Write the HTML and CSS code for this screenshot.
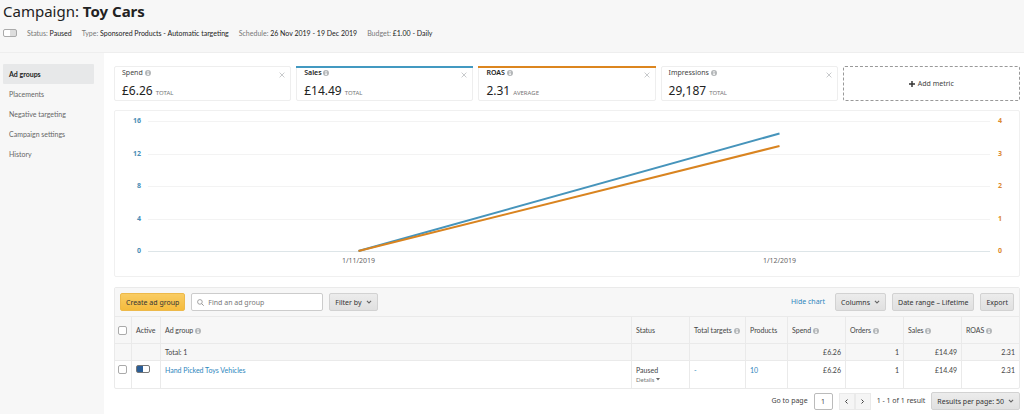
FILE: index.html
```
<!DOCTYPE html>
<html lang="en">
<head>
    <meta charset="UTF-8">
    <meta name="viewport" content="width=device-width, initial-scale=1.0">
    <title>Campaign: Toy Cars</title>
    <link rel="stylesheet" href="styles.css">
</head>
<body>
    <!-- shared icons -->
    <svg class="sprite" aria-hidden="true">
        <symbol id="info" viewBox="0 0 12 12">
            <circle cx="6" cy="6" r="6" fill="#b4b7b9"/>
            <path d="M5 2.2h2v1.8H5zM4.4 5h2.8v3.8h.8V10H4.2V8.800h.8V6.200h-.6z" fill="#fff"/>
        </symbol>
        <symbol id="cross" viewBox="0 0 10 10">
            <path d="M1 1l8 8M9 1l-8 8" fill="none" stroke="#b8bbbd" stroke-width="1.300"/>
        </symbol>
        <symbol id="down" viewBox="0 0 10 10">
            <path d="M1.500 3l3.500 3.500L8.500 3" fill="none" stroke="#666" stroke-width="1.800"/>
        </symbol>
    </svg>

    <header class="header">
        <h1>Campaign: <b>Toy Cars</b></h1>
        <div class="summary">
            <input type="checkbox" class="toggle toggle-off" aria-label="Campaign active">
            <span>Status: <b>Paused</b></span>
            <span>Type: <b>Sponsored Products - Automatic targeting</b></span>
            <span>Schedule: <b>26 Nov 2019 - 19 Dec 2019</b></span>
            <span>Budget: <b>£1.00 - Daily</b></span>
        </div>
    </header>

    <div class="page">
        <nav class="sidebar">
            <a href="#" class="active">Ad groups</a>
            <a href="#">Placements</a>
            <a href="#">Negative targeting</a>
            <a href="#">Campaign settings</a>
            <a href="#">History</a>
        </nav>

        <main class="main">
            <div class="metrics">
                <div class="metric">
                    <div class="metric-name">Spend <svg class="info"><use href="#info"/></svg></div>
                    <div class="metric-value">£6.26 <small>TOTAL</small></div>
                    <button class="close" aria-label="Remove Spend"><svg><use href="#cross"/></svg></button>
                </div>
                <div class="metric metric-blue">
                    <div class="metric-name">Sales <svg class="info"><use href="#info"/></svg></div>
                    <div class="metric-value">£14.49 <small>TOTAL</small></div>
                    <button class="close" aria-label="Remove Sales"><svg><use href="#cross"/></svg></button>
                </div>
                <div class="metric metric-orange">
                    <div class="metric-name">ROAS <svg class="info"><use href="#info"/></svg></div>
                    <div class="metric-value">2.31 <small>AVERAGE</small></div>
                    <button class="close" aria-label="Remove ROAS"><svg><use href="#cross"/></svg></button>
                </div>
                <div class="metric">
                    <div class="metric-name">Impressions <svg class="info"><use href="#info"/></svg></div>
                    <div class="metric-value">29,187 <small>TOTAL</small></div>
                    <button class="close" aria-label="Remove Impressions"><svg><use href="#cross"/></svg></button>
                </div>
                <button class="add-metric">
                    <svg viewBox="0 0 10 10"><path d="M5 0v10M0 5h10" stroke="#333" stroke-width="2.400"/></svg>
                    Add metric
                </button>
            </div>

            <div class="chart">
                <div class="axis axis-left">
                    <span>16</span><span>12</span><span>8</span><span>4</span><span>0</span>
                </div>
                <div class="plot">
                    <svg viewBox="0 0 840 140" preserveAspectRatio="none">
                        <path class="grid-line" d="M0 5.500H840M0 38.500H840M0 70.500H840M0 103.500H840"/>
                        <path class="base-line" d="M0 135.500H840"/>
                        <path class="line-blue" d="M210 135L630 17.500"/>
                        <path class="line-orange" d="M210 135L630 30"/>
                    </svg>
                    <div class="dates"><span>1/11/2019</span><span>1/12/2019</span></div>
                </div>
                <div class="axis axis-right">
                    <span>4</span><span>3</span><span>2</span><span>1</span><span>0</span>
                </div>
            </div>

            <section class="panel">
                <div class="toolbar">
                    <button class="btn btn-primary">Create ad group</button>
                    <label class="search">
                        <svg viewBox="0 0 12 12"><circle cx="5" cy="5" r="4" fill="none" stroke="#888" stroke-width="1.300"/><path d="M8 8l3.500 3.500" stroke="#888" stroke-width="1.500"/></svg>
                        <input type="text" placeholder="Find an ad group" aria-label="Find an ad group">
                    </label>
                    <button class="btn">Filter by <svg class="down"><use href="#down"/></svg></button>
                    <a href="#" class="hide-chart">Hide chart</a>
                    <button class="btn">Columns <svg class="down"><use href="#down"/></svg></button>
                    <button class="btn">Date range – Lifetime</button>
                    <button class="btn">Export</button>
                </div>
                <table>
                    <thead>
                        <tr>
                            <th class="col-check"><input type="checkbox" class="check" aria-label="Select all"></th>
                            <th class="col-active">Active</th>
                            <th>Ad group <svg class="info"><use href="#info"/></svg></th>
                            <th class="col-num">Status</th>
                            <th class="col-targets">Total targets <svg class="info"><use href="#info"/></svg></th>
                            <th class="col-products">Products</th>
                            <th class="col-num">Spend <svg class="info"><use href="#info"/></svg></th>
                            <th class="col-num">Orders <svg class="info"><use href="#info"/></svg></th>
                            <th class="col-num">Sales <svg class="info"><use href="#info"/></svg></th>
                            <th class="col-num">ROAS <svg class="info"><use href="#info"/></svg></th>
                        </tr>
                    </thead>
                    <tbody>
                        <tr class="total">
                            <td></td>
                            <td></td>
                            <td>Total: 1</td>
                            <td></td>
                            <td></td>
                            <td></td>
                            <td class="num">£6.26</td>
                            <td class="num">1</td>
                            <td class="num">£14.49</td>
                            <td class="num">2.31</td>
                        </tr>
                        <tr class="item">
                            <td><input type="checkbox" class="check" aria-label="Select Hand Picked Toys Vehicles"></td>
                            <td><input type="checkbox" class="toggle" aria-label="Ad group active" checked></td>
                            <td><a href="#">Hand Picked Toys Vehicles</a></td>
                            <td>Paused<button class="details">Details <svg viewBox="0 0 8 6"><path d="M0 0h8L4 5z" fill="#666"/></svg></button></td>
                            <td><a href="#">-</a></td>
                            <td><a href="#">10</a></td>
                            <td class="num">£6.26</td>
                            <td class="num">1</td>
                            <td class="num">£14.49</td>
                            <td class="num">2.31</td>
                        </tr>
                    </tbody>
                </table>
            </section>

            <div class="pager">
                <label for="page">Go to page</label>
                <input type="text" id="page" value="1">
                <div class="pager-nav">
                    <button aria-label="Previous"><svg viewBox="0 0 10 10"><path d="M7 1L3 5l4 4" fill="none" stroke="#444" stroke-width="2"/></svg></button>
                    <button aria-label="Next"><svg viewBox="0 0 10 10"><path d="M3 1l4 4-4 4" fill="none" stroke="#444" stroke-width="2"/></svg></button>
                </div>
                <span>1 - 1 of 1 result</span>
                <button class="btn">Results per page: 50 <svg class="down"><use href="#down"/></svg></button>
            </div>
        </main>
    </div>
</body>
</html>
```

FILE: styles.css
```
* {
    box-sizing: border-box;
}
body {
    font-family: "Noto Sans", "Open Sans", sans-serif;
    font-size: 7px;
    line-height: 10px;
    margin: 0;
    color: #444;
    background-color: #fff;
    display: flex;
    flex-direction: column;
    min-height: 100vh;
}
button, input {
    font-family: inherit;
    font-size: 7px;
    color: inherit;
    margin: 0;
}
button {
    cursor: pointer;
}
a {
    color: #2e86bd;
    text-decoration: none;
}
.sprite {
    display: none;
}
.info {
    width: 6px;
    height: 6px;
    vertical-align: -1px;
}
.down {
    width: 6px;
    height: 6px;
    margin-left: 4px;
}
.summary, .sidebar, table {
    font-family: Lato, "Open Sans", sans-serif;
}

/* header */
.header {
    background-color: #f7f7f7;
    border-bottom: 1px solid #eee;
    padding: 0 3px 14px;
}
.header h1 {
    margin: 0 0 6px;
    font-size: 15px;
    line-height: 22px;
    font-weight: 400;
    color: #222;
}
.summary {
    display: flex;
    align-items: center;
    gap: 10px;
    color: #777;
}
.summary b {
    font-weight: 400;
    color: #222;
}
.toggle {
    appearance: none;
    display: block;
    width: 14px;
    height: 8px;
    border: 1px solid #777;
    border-radius: 2px;
    background: linear-gradient(to right, #2a5d96 50%, #fff 50%);
}
.toggle-off {
    border-color: #aaa;
    background: linear-gradient(to right, #fff 50%, #ddd 50%);
}

/* sidebar */
.page {
    display: flex;
    flex: 1;
}
.sidebar {
    width: 104px;
    flex: none;
    padding: 11px 10px 0 3px;
    background-color: #f7f7f7;
}
.sidebar a {
    display: block;
    padding: 5px 6px;
    color: #666;
}
.sidebar .active {
    background-color: #e7e8e9;
    border-radius: 1px;
    color: #222;
    font-weight: 700;
}
.main {
    flex: 1;
    min-width: 0;
    padding: 13px 4px 4px 10px;
}

/* metrics */
.metrics {
    display: grid;
    grid-template-columns: repeat(5, 1fr);
    gap: 5px;
    margin-bottom: 9px;
}
.metric, .add-metric {
    height: 35px;
    border-radius: 2px;
}
.metric {
    display: flex;
    flex-direction: column;
    justify-content: space-between;
    position: relative;
    padding: 1px 7px 0;
    border: 1px solid #eee;
}
.metric-blue::before, .metric-orange::before {
    content: "";
    position: absolute;
    top: -1px;
    left: -1px;
    right: -1px;
    height: 2px;
    background-color: #4399c1;
}
.metric-orange::before {
    background-color: #dc861f;
}
.metric-blue .metric-name, .metric-orange .metric-name {
    font-weight: 600;
    color: #222;
}
.metric-value {
    font-size: 12px;
    line-height: 14px;
    color: #222;
}
.metric-value small {
    font-size: 6px;
    color: #777;
}
.close {
    position: absolute;
    top: 5px;
    right: 5px;
    padding: 0;
    border: 0;
    background: none;
    line-height: 0;
}
.close svg {
    width: 6px;
    height: 6px;
}
.add-metric {
    border: 1px dashed #999;
    background: none;
}
.add-metric svg {
    width: 6px;
    height: 6px;
    margin-right: 1px;
    vertical-align: -1px;
}

/* chart */
.chart {
    display: flex;
    margin-bottom: 10px;
    padding: 5px 13px 10px 18px;
    border: 1px solid #f0f0f0;
    border-radius: 2px;
}
.axis {
    display: flex;
    flex-direction: column;
    justify-content: space-between;
    width: 8px;
    height: 140px;
    font-weight: 700;
}
.axis-left {
    margin-right: 7px;
    text-align: right;
    color: #4a8db5;
}
.axis-right {
    margin-left: 8px;
    color: #dc8a2e;
}
.plot {
    flex: 1;
}
.plot svg {
    display: block;
    width: 100%;
    height: 140px;
}
.plot path {
    fill: none;
    stroke-width: 1;
    vector-effect: non-scaling-stroke;
}
.plot .grid-line {
    stroke: #f3f3f3;
}
.plot .base-line {
    stroke: #dde5e8;
}
.plot .line-blue, .plot .line-orange {
    stroke: #4694bb;
    stroke-width: 2;
}
.plot .line-orange {
    stroke: #d98420;
}
.dates {
    display: flex;
    color: #666;
}
.dates span {
    flex: 1;
    text-align: center;
}

/* ad groups */
.panel {
    border: 1px solid #eaeaea;
    border-radius: 2px;
}
.toolbar {
    display: flex;
    align-items: center;
    gap: 6px;
    padding: 5px;
    background-color: #f7f7f7;
}
.btn {
    display: flex;
    align-items: center;
    height: 18px;
    padding: 0 5px;
    border: 1px solid #d2d2d2;
    border-radius: 2px;
    background: linear-gradient(#ececec, #e0e0e0);
    white-space: nowrap;
    color: #333;
}
.btn-primary {
    border-color: #edb94a;
    background: linear-gradient(#f9cc63, #f5bb3c);
}
.search {
    display: flex;
    align-items: center;
    gap: 4px;
    width: 132px;
    height: 18px;
    padding: 0 5px;
    border: 1px solid #ccc;
    border-radius: 2px;
    background-color: #fff;
}
.search svg {
    flex: none;
    width: 7px;
    height: 7px;
}
.search input {
    flex: 1;
    min-width: 0;
    padding: 0;
    border: 0;
    outline: 0;
}
.search input::placeholder {
    color: #777;
}
.hide-chart {
    margin-left: auto;
    margin-right: 4px;
}
table {
    width: 100%;
    table-layout: fixed;
    border-collapse: separate;
    border-spacing: 0;
}
th, td {
    padding: 0 4px;
    border-top: 1px solid #eaeaea;
    border-left: 1px solid #eaeaea;
    text-align: left;
    font-weight: 400;
    white-space: nowrap;
}
th:first-child, td:first-child {
    border-left: 0;
    padding: 0 3px;
}
th {
    height: 27px;
    background-color: #f7f7f7;
}
.col-check {
    width: 16px;
}
.col-active {
    width: 29px;
}
.col-num {
    width: 58px;
}
.col-targets {
    width: 56px;
}
.col-products {
    width: 42px;
}
.num {
    text-align: right;
}
.total td {
    height: 17px;
    background-color: #f7f7f7;
}
.item td {
    height: 28px;
    padding-top: 4px;
    vertical-align: top;
}
.check {
    appearance: none;
    display: block;
    width: 9px;
    height: 9px;
    border: 1px solid #aaa;
    border-radius: 2px;
    background-color: #fff;
}
.details {
    display: block;
    padding: 0;
    border: 0;
    background: none;
    font-size: 6px;
    line-height: 10px;
    color: #777;
}
.details svg {
    width: 4px;
    height: 3px;
    vertical-align: 1px;
}

/* pager */
.pager {
    display: flex;
    justify-content: flex-end;
    align-items: center;
    gap: 6px;
    margin-top: 3px;
}
.pager input {
    width: 19px;
    height: 17px;
    padding: 0;
    border: 1px solid #bbb;
    border-radius: 2px;
    text-align: center;
}
.pager-nav {
    display: flex;
}
.pager-nav button {
    width: 16px;
    height: 17px;
    padding: 0;
    border: 1px solid #eaeaea;
    background-color: #f5f5f5;
    line-height: 0;
}
.pager-nav svg {
    width: 5px;
    height: 5px;
}
```
